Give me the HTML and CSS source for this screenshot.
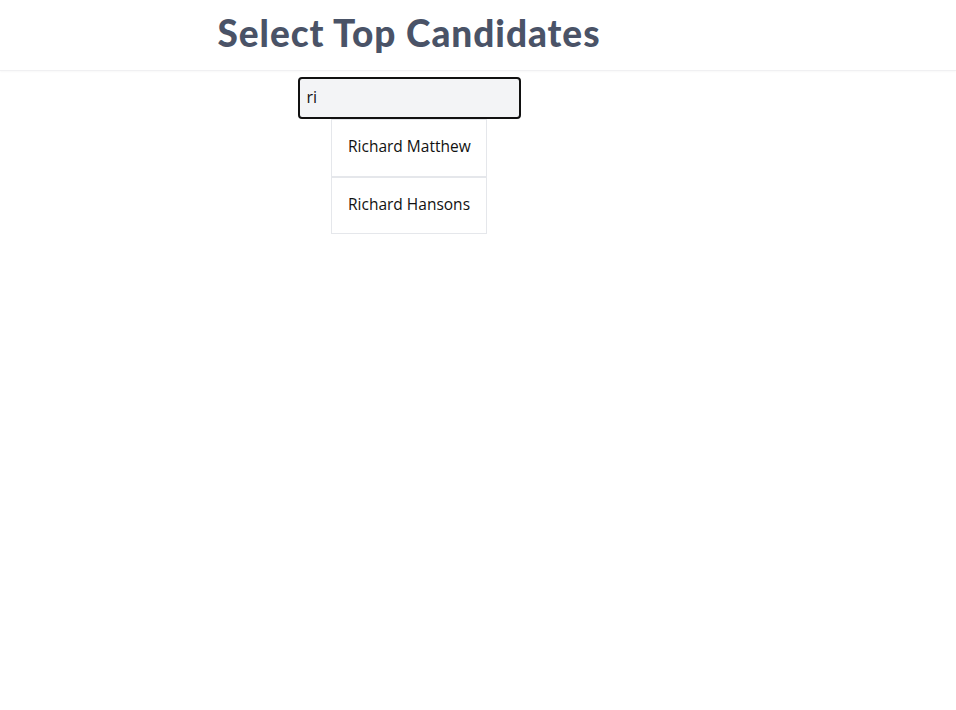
FILE: index.html
```html
<!DOCTYPE html>
<html>
<head>
<meta charset="utf-8">
<link rel="stylesheet" href="styles.css">
</head>
<body>
<header class="header">
  <div class="wrap">
    <h1 class="title">Select Top Candidates</h1>
  </div>
</header>
<main class="wrap main">
  <div class="search">
    <input class="search-input" type="text" value="ri">
    <ul class="options">
      <li class="option">Richard Matthew</li>
      <li class="option">Richard Hansons</li>
    </ul>
  </div>
</main>
</body>
</html>
```
FILE: styles.css
```css
* { box-sizing: border-box; }
body {
  margin: 0;
  font-family: "Open Sans", "Noto Sans", sans-serif;
  background: #fff;
  color: #111;
}
.wrap {
  width: 818px;
  display: flex;
  flex-direction: column;
  align-items: center;
}
.header {
  height: 71px;
  border-bottom: 1px solid #f0f0f2;
  box-shadow: 0 1px 2px rgba(0,0,0,0.03);
}
.title {
  margin: 0;
  padding-top: 11px;
  font-family: "Lato", "Open Sans", sans-serif;
  font-weight: 900;
  font-size: 37px;
  line-height: 44px;
  color: #4a5367;
  letter-spacing: 0.95px;
}
.main { padding-top: 6px; }
.search {
  display: flex;
  flex-direction: column;
  align-items: center;
}
.search-input {
  width: 223px;
  height: 42px;
  border: 2px solid #111;
  border-radius: 4px;
  background: #f3f4f6;
  font-family: "Open Sans", sans-serif;
  font-size: 16px;
  padding: 0 7px 2px;
  color: #111;
  outline: none;
}
.options {
  list-style: none;
  margin: 0;
  padding: 0;
  width: 156px;
}
.option {
  height: 58px;
  display: flex;
  align-items: center;
  padding: 0 16px 4px;
  border: 1px solid #e5e7eb;
  font-size: 15.5px;
  white-space: nowrap;
  color: #111;
}
.option + .option { margin-top: -1px; border-top-width: 2px; }
```
